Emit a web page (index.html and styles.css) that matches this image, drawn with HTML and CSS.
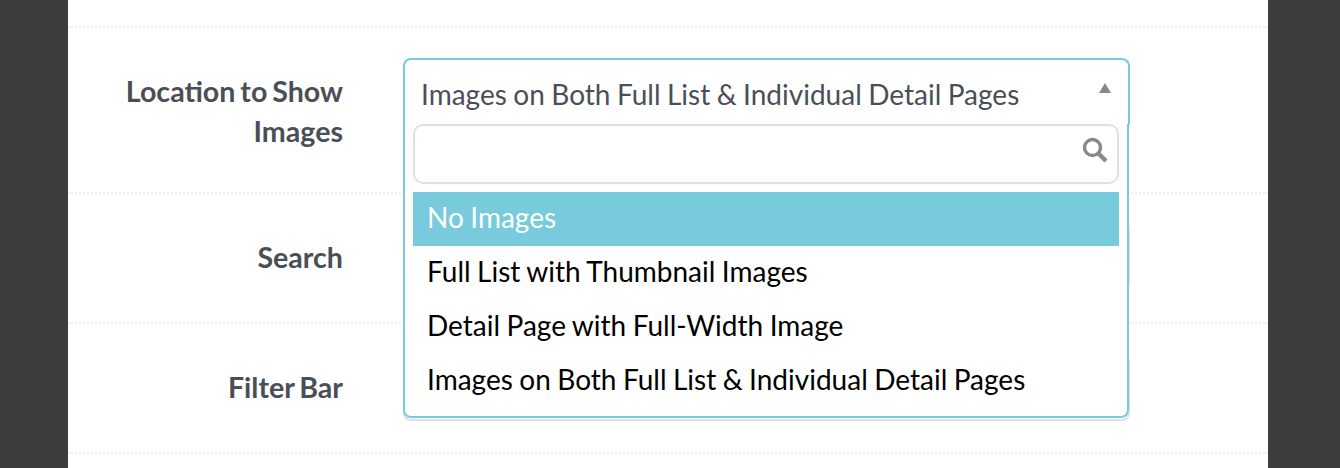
FILE: index.html
```html
<!DOCTYPE html>
<html lang="en">
<head>
    <meta charset="UTF-8">
    <meta name="viewport" content="width=device-width, initial-scale=1.0">
    <title>Settings</title>
    <link rel="stylesheet" href="styles.css">
</head>
<body>
    <div class="page">
        <div class="form-row form-row-first">
            <label class="form-label">Location to Show Images</label>
            <div class="chosen-container chosen-open">
                <div class="chosen-single">
                    <span>Images on Both Full List &amp; Individual Detail Pages</span>
                    <svg class="chosen-arrow" width="12" height="10" viewBox="0 0 12 10"><path d="M6 0L12 10H0Z" fill="#888"/></svg>
                </div>
                <div class="chosen-drop">
                    <div class="chosen-search">
                        <input type="text" class="chosen-input">
                        <svg class="chosen-search-icon" width="26" height="26" viewBox="0 0 26 26">
                            <circle cx="10.5" cy="10.5" r="8" fill="none" stroke="#888" stroke-width="3.4"/>
                            <path d="M16.5 16.5L24 24" fill="none" stroke="#888" stroke-width="4.4"/>
                        </svg>
                    </div>
                    <ul class="chosen-results">
                        <li class="chosen-highlighted">No Images</li>
                        <li>Full List with Thumbnail Images</li>
                        <li>Detail Page with Full-Width Image</li>
                        <li>Images on Both Full List &amp; Individual Detail Pages</li>
                    </ul>
                </div>
            </div>
        </div>
        <div class="form-row">
            <label class="form-label">Search</label>
            <div class="chosen-container"></div>
        </div>
        <div class="form-row">
            <label class="form-label">Filter Bar</label>
            <div class="chosen-container"></div>
        </div>
    </div>
</body>
</html>
```

FILE: styles.css
```css
body {
    margin: 0;
    background-color: #3c3d3f;
    font-family: Lato, "Open Sans", sans-serif;
    overflow: hidden;
}
.page {
    width: 1200px;
    height: 468px;
    margin-left: 68px;
    padding-top: 26px;
    box-sizing: border-box;
    background-color: #fff;
}
.page::before {
    content: "";
    display: block;
    border-top: 2px dotted #eceef0;
}
.form-row {
    display: grid;
    grid-template-columns: 275px 727px;
    column-gap: 60px;
    align-items: start;
    height: 98px;
    padding-top: 30px;
    border-bottom: 2px dotted #eceef0;
}
.form-row-first {
    height: 134px;
}
.form-label {
    padding-top: 13px;
    font-size: 28.6px;
    line-height: 40px;
    word-spacing: -2px;
    font-weight: 700;
    color: #4a4f57;
    text-align: right;
}
.chosen-container {
    position: relative;
    height: 67px;
    box-sizing: border-box;
    border: 2px solid #dde1e7;
    border-radius: 8px;
    background-color: #fff;
}
.chosen-open {
    border: 0;
    z-index: 2;
}
.chosen-single {
    display: flex;
    justify-content: space-between;
    height: 67px;
    padding: 14px 17px 0 16px;
    box-sizing: border-box;
    border: 2px solid #77cbdc;
    border-bottom: 0;
    border-radius: 8px 8px 0 0;
    font-size: 28px;
    line-height: 40px;
    word-spacing: -0.7px;
    color: #4a4f57;
}
.chosen-arrow {
    margin-top: 9px;
}
.chosen-drop {
    position: absolute;
    top: 66px;
    left: 0;
    width: 726px;
    height: 294px;
    box-sizing: border-box;
    padding: 0 8px;
    background-color: #fff;
    border: 2px solid #77cbdc;
    border-top: 0;
    border-radius: 0 0 8px 8px;
}
.chosen-search {
    position: relative;
    margin-bottom: 8px;
}
.chosen-input {
    display: block;
    width: 100%;
    height: 60px;
    box-sizing: border-box;
    border: 2px solid #dde1e7;
    border-radius: 10px;
    background-color: #fff;
    outline: none;
}
.chosen-search-icon {
    position: absolute;
    top: 13px;
    right: 11px;
}
.chosen-results {
    margin: 0;
    padding: 0;
    list-style: none;
    font-size: 28px;
    word-spacing: -0.7px;
    color: #000;
}
.chosen-results li {
    height: 54px;
    line-height: 51px;
    padding-left: 14px;
}
.chosen-results .chosen-highlighted {
    background-color: #77cbdc;
    color: #fff;
}
```
